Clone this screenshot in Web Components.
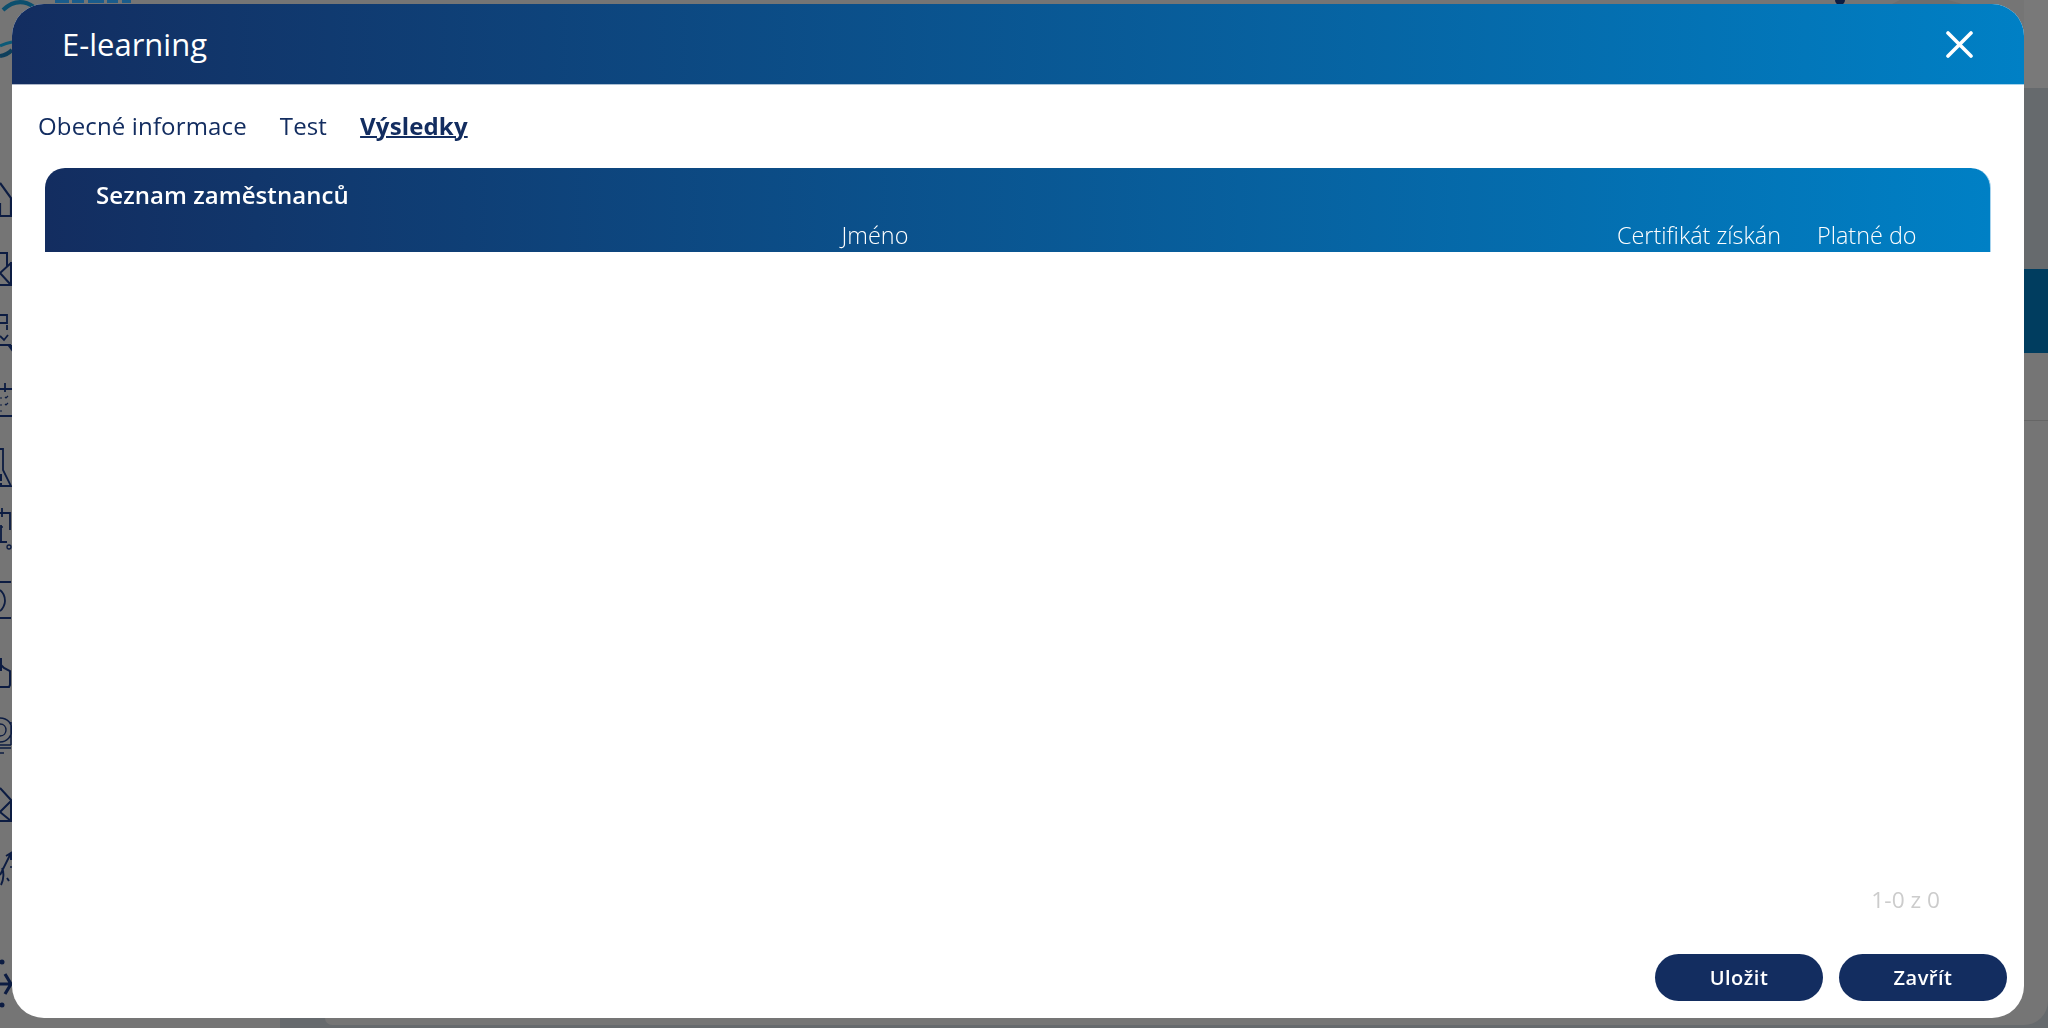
<!DOCTYPE html>
<html lang="cs">
<head>
<meta charset="utf-8">
<title>E-learning</title>
<style>
  html, body { margin: 0; height: 100%; overflow: hidden; }
  body { font-family: "Open Sans", "Noto Sans", sans-serif; }
</style>
</head>
<body>
<app-page>
  <learning-modal heading="E-learning">
    <modal-tabs active="2" tabs="Obecné informace|Test|Výsledky"></modal-tabs>
    <results-table title="Seznam zaměstnanců"></results-table>
    <table-pager>1-0 z 0</table-pager>
    <modal-button slot="actions">Uložit</modal-button>
    <modal-button slot="actions">Zavřít</modal-button>
  </learning-modal>
</app-page>

<script>
const navy = '#132d60'
const headGradient = 'linear-gradient(90deg, #132d60 0%, #0080c5 100%)'

class AppPage extends HTMLElement {
  constructor() {
    super()
    this.attachShadow({mode: 'open'})
    this.shadowRoot.innerHTML = `
      <style>
        :host { display: grid; grid-template-columns: 12px 1fr 24px; grid-template-rows: 4px 1fr 10px;
          width: 100vw; height: 100vh; background: #757575; overflow: hidden; }
        svg { display: block; overflow: visible; }
        .side { grid-column: 1; grid-row: 1 / 4; }
        .right { grid-column: 3; grid-row: 1 / 4; display: flex; flex-direction: column; background: #666a6d; }
        .right .top { height: 88px; background: #797979; }
        .right .gap { height: 181px; }
        .right .block { height: 84px; background: #003d5f; }
        .right .rest { flex: 1; background: #757575; margin-bottom: 3px; border-bottom-right-radius: 24px; }
        .right .rule { height: 1px; background: #666; margin-top: 67px; }
        .bottom { grid-column: 2; grid-row: 3; margin-left: 268px; background: #666a6d; }
        .bottom div { height: 7px; margin-left: 45px; background: #757575; border-bottom-left-radius: 7px; }
      </style>
      <svg class="side" width="12" height="1028" fill="none" stroke="#0c1c42" stroke-width="1.8">
        <path d="M3 10Q18-4 34 7" stroke="#0c4f6e" stroke-width="4"/>
        <path d="M0 46Q6 43 12 42" stroke="#0c5a78" stroke-width="3"/>
        <path d="M0 56Q7 55 12 50" stroke="#0e3f5c" stroke-width="4"/>
        <path d="M55 1.500h83" stroke="#1a5c8c" stroke-width="3" stroke-dasharray="14 3 12 4 16 3 11 4 9 7"/>
        <path d="M1892 4l8-4h48l14 4z" fill="#6e6e6e" stroke="none"/>
        <circle cx="1840" cy="0" r="5" fill="#0c1c42" stroke="none"/>
        <path d="M2034 19l14 11" stroke-width="2.400"/>

        <path d="M0 183l11 15v18H0M0 203v13" stroke-width="2.200"/>
        <path d="M0 253h7v14M11 262v23H0M11 263L0 273l11 12" stroke-width="2"/>
        <path d="M0 315h7v8H0M7 325v5M0 336l4 4 4-5M0 345h11"/>
        <path d="M9 346h3v4z" fill="#0c1c42"/>
        <path d="M5 383v9M0 389h12M0 416h12"/>
        <path d="M5 397l1 1 2-2M5 404l1 1 2-2M0 398h2M0 405h2M0 411h2" stroke-width="1.200"/>
        <path d="M0 449h3v21l8 16H0"/>
        <path d="M1 474v7M1 483v2" stroke-width="2"/>
        <path d="M2 508v9M0 513h10v17M0 542h7M1 525v17"/>
        <circle cx="2" cy="527" r="1" fill="#0c1c42" stroke="none"/>
        <circle cx="9" cy="547" r="2" stroke-width="1.300"/>
        <path d="M0 582h11M0 590c4 3 5 8 5 11s-2 8-5 10M0 618h11"/>
        <path d="M1 658v13M1 665l3 3 6 3v14l-1 2H0" stroke-width="2"/>
        <path d="M0 718c8 0 12 6 12 12s-5 12-12 12M0 724c4 0 6 3 6 6s-2 6-6 6M11 722v23M0 745h11M0 748h11M0 753h4" stroke-width="1.400"/>
        <path d="M0 788l11 12v21H0M11 801L0 812l11 9" stroke-width="2"/>
        <path d="M0 875L11 853M6 856l5-3v7M2 868c2 4 2 11-1 17M7 878l2 3" stroke-width="1.900"/>
        <circle cx="11" cy="867" r="1" fill="#0c1c42" stroke="none"/>
        <circle cx="2" cy="962" r="2.500" fill="#0c1c42" stroke="none"/>
        <path d="M0 984h10M5 974l6 10-6 10" stroke-width="3.200"/>
        <circle cx="2" cy="1005" r="2.500" fill="#0c1c42" stroke="none"/>
      </svg>
      <div class="right">
        <div class="top"></div><div class="gap"></div><div class="block"></div>
        <div class="rest"><div class="rule"></div></div>
      </div>
      <div class="bottom"><div></div></div>
      <slot></slot>
    `
  }
}

class LearningModal extends HTMLElement {
  constructor() {
    super()
    this.attachShadow({mode: 'open'})
    this.shadowRoot.innerHTML = `
      <style>
        :host { display: flex; flex-direction: column; position: fixed; left: 12px; top: 4px; width: 2012px; height: 1014px;
          background: #fff; border-radius: 32px; overflow: hidden; color: ${navy}; font-family: "Open Sans", sans-serif; }
        header { height: 80px; flex: none; display: flex; align-items: center; justify-content: space-between;
          padding: 0 51px 0 50px; background: ${headGradient}; color: #fff; font-size: 31px; line-height: 1; }
        .edge { height: 1px; flex: none; background: ${headGradient}; opacity: .35; }
        svg { display: block; }
        .body { flex: 1; display: flex; flex-direction: column; min-height: 0; }
        .actions { display: flex; justify-content: flex-end; gap: 16px; padding: 0 17px 17px 0; }
      </style>
      <header><span id="heading"></span>
        <svg width="27" height="27" viewBox="0 0 27 27" fill="none" stroke="#fff" stroke-width="3.600" stroke-linecap="round"><path d="M2 2l23 23M25 2L2 25"/></svg>
      </header>
      <div class="edge"></div>
      <div class="body"><slot></slot></div>
      <div class="actions"><slot name="actions"></slot></div>
    `
  }
  connectedCallback() {
    this.shadowRoot.getElementById('heading').textContent = this.getAttribute('heading')
  }
}

class ModalTabs extends HTMLElement {
  constructor() {
    super()
    this.attachShadow({mode: 'open'})
  }
  connectedCallback() {
    const active = Number(this.getAttribute('active'))
    const tabs = this.getAttribute('tabs').split('|')
    this.shadowRoot.innerHTML = `
      <style>
        :host { display: flex; gap: 33px; height: 83px; align-items: flex-start; padding: 24px 0 0 26px; box-sizing: border-box;
          font-size: 24px; line-height: 33px; letter-spacing: .15px; }
        .active { font-weight: 700; text-decoration: underline; text-decoration-thickness: 2px; }
      </style>
      ${tabs.map((t, i) => `<span class="${i === active ? 'active' : ''}">${t}</span>`).join('')}
    `
  }
}

class ResultsTable extends HTMLElement {
  constructor() {
    super()
    this.attachShadow({mode: 'open'})
  }
  connectedCallback() {
    this.shadowRoot.innerHTML = `
      <style>
        :host { display: block; flex: 1; margin: 0 33px 0 33px; }
        .head { height: 84px; box-sizing: border-box; border-radius: 20px 20px 0 0; background: ${headGradient}; color: #fff;
          border-right: 1px solid #a8d4ee; }
        h2 { margin: 0; padding: 12px 0 0 51px; font-size: 24px; line-height: 30px; font-weight: 600; letter-spacing: .06px; }
        .cols { display: grid; grid-template-columns: 1572px 200px 1fr; font-size: 23.4px; line-height: 32px; font-weight: 300; padding-top: 9px; }
        .cols span:first-child { text-align: center; padding-left: 88px; }
      </style>
      <div class="head">
        <h2>${this.getAttribute('title')}</h2>
        <div class="cols"><span>Jméno</span><span>Certifikát získán</span><span>Platné do</span></div>
      </div>
    `
  }
}

class TablePager extends HTMLElement {
  constructor() {
    super()
    this.attachShadow({mode: 'open'})
    this.shadowRoot.innerHTML = `
      <style>
        :host { display: block; height: 69px; padding-right: 84px; text-align: right; font-size: 22.7px; line-height: 30px; color: #ccc; }
      </style>
      <slot></slot>
    `
  }
}

class ModalButton extends HTMLElement {
  constructor() {
    super()
    this.attachShadow({mode: 'open'})
    this.shadowRoot.innerHTML = `
      <style>
        :host { display: flex; align-items: center; justify-content: center; width: 168px; height: 47px; border-radius: 24px;
          background: ${navy}; color: #fff; font-size: 20px; font-weight: 600; letter-spacing: .5px; cursor: pointer; }
      </style>
      <slot></slot>
    `
  }
}

customElements.define('app-page', AppPage)
customElements.define('learning-modal', LearningModal)
customElements.define('modal-tabs', ModalTabs)
customElements.define('results-table', ResultsTable)
customElements.define('table-pager', TablePager)
customElements.define('modal-button', ModalButton)
</script>
</body>
</html>
